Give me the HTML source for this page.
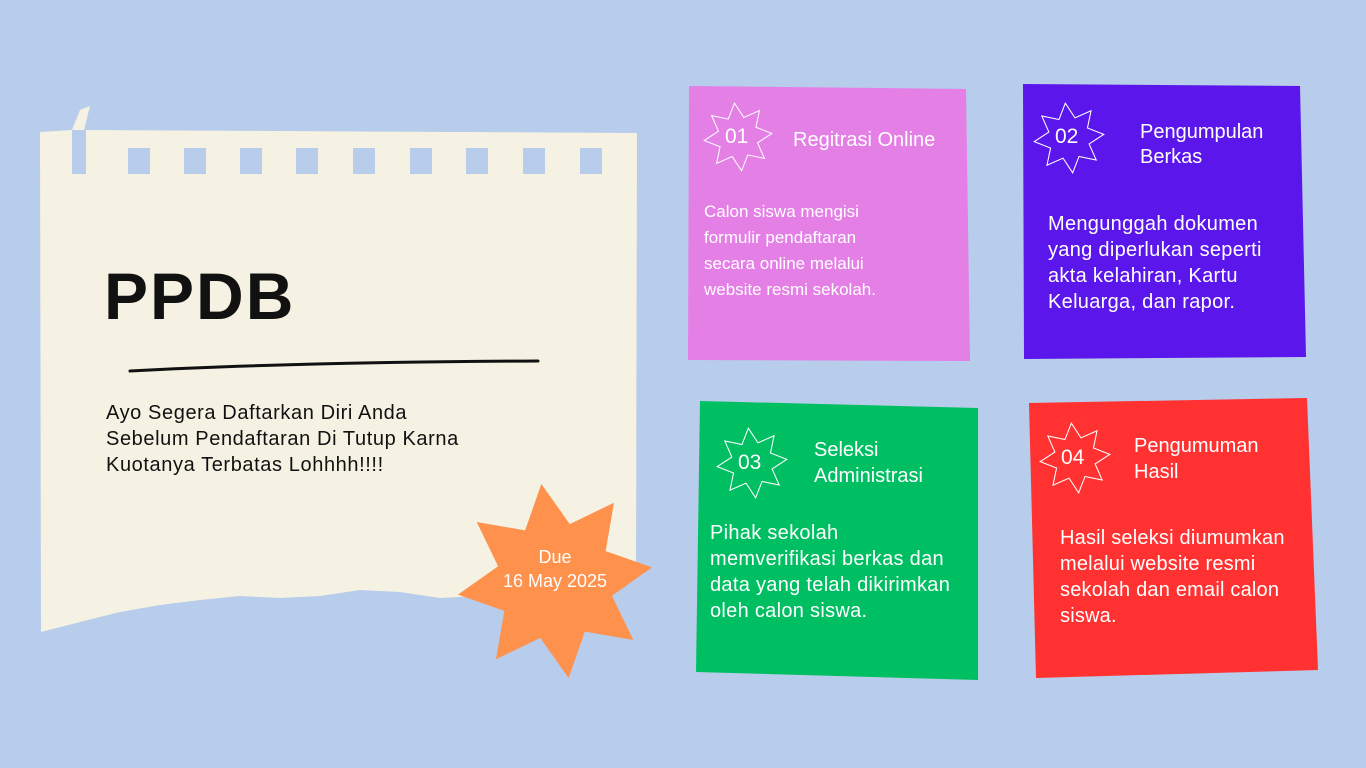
<!DOCTYPE html>
<html><head><meta charset="utf-8"><style>
*{margin:0;padding:0}
body{width:1366px;height:768px;background:#b8cceb;position:relative;overflow:hidden;font-family:"Liberation Sans",sans-serif}
.t{position:absolute;white-space:nowrap;line-height:26px;font-size:20px;color:#fff}
svg{position:absolute;left:0;top:0}
</style></head><body>
<svg width="1366" height="768">
<defs>
<polygon id="st" points="0,-1 0.23,-0.554 0.707,-0.707 0.554,-0.23 1,0 0.554,0.23 0.707,0.707 0.23,0.554 0,1 -0.23,0.554 -0.707,0.707 -0.554,0.23 -1,0 -0.554,-0.23 -0.707,-0.707 -0.23,-0.554"/>
</defs>
<path d="M40,132 L72,130 L80,110 L90,106 L84,130 L637,133 L636,575 L600,580 L560,585 L520,588 L480,596 L440,598 L400,592 L360,590 L320,596 L280,598 L240,596 L200,600 L160,605 L120,612 L80,622 L41,632 Z" fill="#f5f2e3"/>
<g fill="#b8cceb">
<rect x="72" y="130" width="14" height="44"/>
<rect x="128" y="148" width="22" height="26"/><rect x="184" y="148" width="22" height="26"/><rect x="240" y="148" width="22" height="26"/><rect x="296" y="148" width="22" height="26"/><rect x="353" y="148" width="22" height="26"/><rect x="410" y="148" width="22" height="26"/><rect x="466" y="148" width="22" height="26"/><rect x="523" y="148" width="22" height="26"/><rect x="580" y="148" width="22" height="26"/>
</g>
<path d="M130,371 Q300,362 538,361" stroke="#111" stroke-width="3" fill="none" stroke-linecap="round"/>
<use href="#st" transform="translate(555,581) rotate(-8) scale(98)" fill="#fe914b"/>
<polygon points="689,86 966,89 970,361 688,360" fill="#e47fe6"/>
<polygon points="1023,84 1300,86 1306,357 1024,359" fill="#5b17eb"/>
<polygon points="700,401 978,408 978,680 696,672" fill="#00bf63"/>
<polygon points="1029,403 1307,398 1318,670 1036,678" fill="#ff3131"/>
<g fill="none" stroke="#fff">
<use href="#st" transform="translate(738,137) rotate(-6) scale(34)" style="stroke-width:0.03"/>
<use href="#st" transform="translate(1069,138) rotate(-6) scale(35)" style="stroke-width:0.03"/>
<use href="#st" transform="translate(752,463) rotate(-6) scale(35)" style="stroke-width:0.03"/>
<use href="#st" transform="translate(1075,458) rotate(-6) scale(35)" style="stroke-width:0.03"/>
</g>
</svg>
<div class="t" style="left:104px;top:258px;font-size:66px;line-height:76px;color:#111;font-weight:bold;letter-spacing:2px">PPDB</div>
<div class="t" style="left:106px;top:400px;color:#111;font-size:20px;letter-spacing:0.6px">Ayo Segera Daftarkan Diri Anda<br>Sebelum Pendaftaran Di Tutup Karna<br>Kuotanya Terbatas Lohhhh!!!!</div>
<div class="t" style="left:480px;top:545px;width:150px;text-align:center;font-size:18px;line-height:24px">Due<br>16 May 2025</div>

<div class="t" style="left:725px;top:124px;font-size:21px">01</div>
<div class="t" style="left:793px;top:127px;font-size:20px">Regitrasi Online</div>
<div class="t" style="left:704px;top:199px;font-size:17px">Calon siswa mengisi<br>formulir pendaftaran<br>secara online melalui<br>website resmi sekolah.</div>

<div class="t" style="left:1055px;top:124px;font-size:21px">02</div>
<div class="t" style="left:1140px;top:120px;line-height:25px">Pengumpulan<br>Berkas</div>
<div class="t" style="left:1048px;top:211px;letter-spacing:0.3px">Mengunggah dokumen<br>yang diperlukan seperti<br>akta kelahiran, Kartu<br>Keluarga, dan rapor.</div>

<div class="t" style="left:738px;top:450px;font-size:21px">03</div>
<div class="t" style="left:814px;top:437px">Seleksi<br>Administrasi</div>
<div class="t" style="left:710px;top:520px;letter-spacing:0.3px">Pihak sekolah<br>memverifikasi berkas dan<br>data yang telah dikirimkan<br>oleh calon siswa.</div>

<div class="t" style="left:1061px;top:445px;font-size:21px">04</div>
<div class="t" style="left:1134px;top:433px">Pengumuman<br>Hasil</div>
<div class="t" style="left:1060px;top:525px;letter-spacing:0.2px">Hasil seleksi diumumkan<br>melalui website resmi<br>sekolah dan email calon<br>siswa.</div>
</body></html>
